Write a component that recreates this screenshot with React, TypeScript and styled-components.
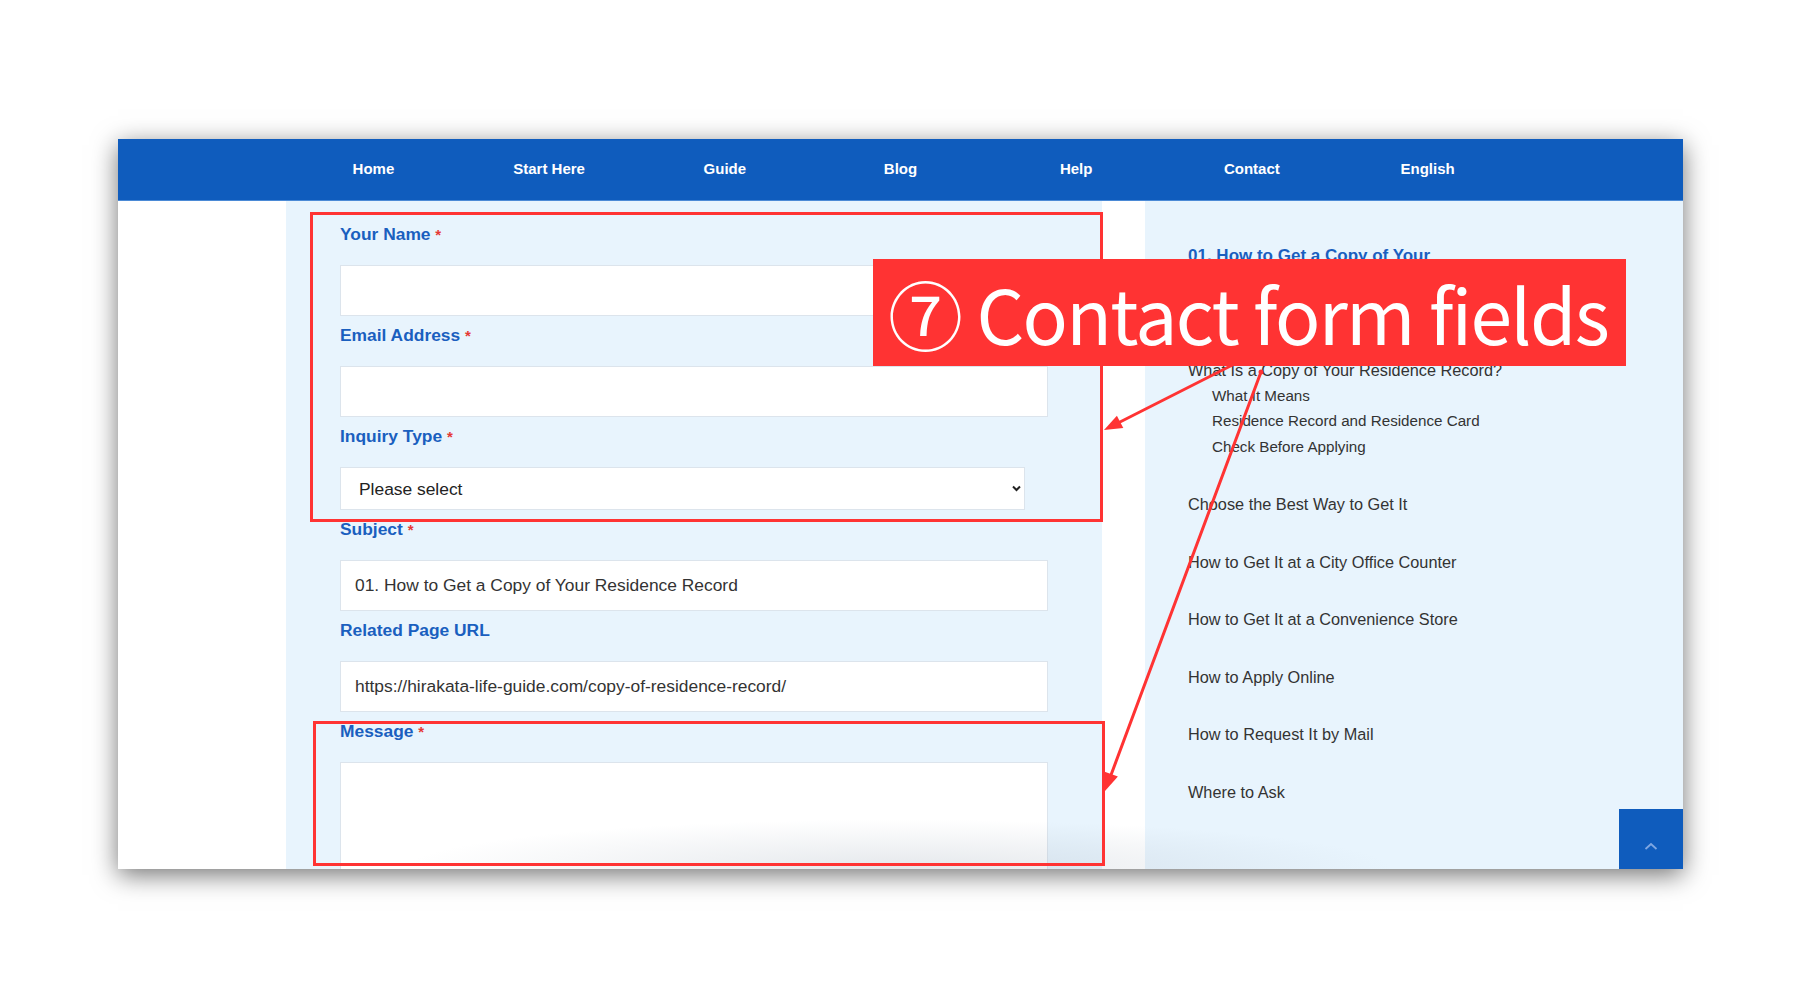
import React from "react";
import styled, { createGlobalStyle } from "styled-components";

const GlobalStyle = createGlobalStyle`
  html, body {
    margin: 0;
    padding: 0;
    background: #fff;
  }
  body {
    font-family: "Liberation Sans", Arial, sans-serif;
  }
`;

const Stage = styled.div`
  position: relative;
  width: 1800px;
  height: 1008px;
  padding: 139px 0 0 118px;
  box-sizing: border-box;
  overflow: hidden;
`;

const Frame = styled.div`
  position: relative;
  width: 1565px;
  height: 730px;
  display: flex;
  flex-direction: column;
  overflow: hidden;
  background: #fff;
  box-shadow: 0 6px 24px rgba(0, 0, 0, 0.55);
`;

const NavBar = styled.nav`
  flex: none;
  height: 62px;
  display: flex;
  justify-content: center;
  background: #0f5cbd;
  border-bottom: 1px solid #4b8ad6;
  box-sizing: border-box;
`;

const NavList = styled.ul`
  display: flex;
  margin: 0;
  padding: 0;
  list-style: none;
`;

const NavItem = styled.li`
  width: 175.7px;
  display: flex;
  align-items: center;
  justify-content: center;
  padding-bottom: 2px;
  color: #fff;
  font-size: 15px;
  font-weight: 700;
`;

const Content = styled.div`
  flex: 1;
  display: flex;
  min-height: 0;
`;

const Gutter = styled.div<{ $w: number }>`
  flex: none;
  width: ${(p) => p.$w}px;
`;

const FormPanel = styled.form`
  flex: none;
  width: 816px;
  padding: 23px 54px 0;
  box-sizing: border-box;
  background: #e8f4fd;
`;

const Label = styled.label`
  display: block;
  margin-bottom: 20px;
  font-size: 17.4px;
  font-weight: 700;
  line-height: 21px;
  color: #1a5fbf;
`;

const Req = styled.span`
  color: #e53935;
  font-size: 15px;
`;

const TextInput = styled.input`
  display: block;
  width: 100%;
  height: 51px;
  margin: 0 0 9px;
  padding: 0 14px;
  box-sizing: border-box;
  border: 1px solid #dce4ec;
  background: #fff;
  font-family: "Liberation Sans", Arial, sans-serif;
  font-size: 17.4px;
  color: #333;
  outline: none;
`;

const SelectWrap = styled.div`
  position: relative;
  width: 685px;
  margin-bottom: 9px;
`;

const Select = styled.select`
  display: block;
  width: 100%;
  height: 43px;
  padding: 0 18px;
  border: 1px solid #dce4ec;
  border-radius: 0;
  background: #fff;
  appearance: none;
  font-family: "Liberation Sans", Arial, sans-serif;
  font-size: 17.4px;
  color: #222;
  outline: none;
`;

const Chevron = styled.svg`
  position: absolute;
  right: 4px;
  top: 18px;
  pointer-events: none;
`;

const MessageBox = styled.textarea`
  display: block;
  width: 100%;
  height: 160px;
  margin: 0;
  box-sizing: border-box;
  border: 1px solid #dce4ec;
  background: #fff;
  resize: none;
  outline: none;
`;

const Sidebar = styled.aside`
  flex: 1;
  padding: 43px 0 0 43px;
  background: #e8f4fd;
`;

const TocTitle = styled.div`
  max-width: 300px;
  margin-bottom: 68px;
  font-size: 17px;
  font-weight: 700;
  line-height: 24px;
  color: #1a5fbf;
`;

const TocList = styled.ul`
  margin: 0;
  padding: 0;
  list-style: none;
`;

const TocItem = styled.li`
  margin-bottom: 37.6px;
  font-size: 16.3px;
  line-height: 20px;
  color: #333;
`;

const SubList = styled.ul`
  margin: 0;
  padding: 0 0 0 24px;
  list-style: none;
`;

const SubItem = styled.li`
  padding-top: 5.5px;
  font-size: 15.2px;
  line-height: 20px;
  color: #333;
`;

const BottomHaze = styled.div`
  position: absolute;
  left: 280px;
  bottom: 0;
  width: 1000px;
  height: 50px;
  background: radial-gradient(ellipse at 50% 100%, rgba(160, 172, 186, 0.28), rgba(160, 172, 186, 0) 70%);
  pointer-events: none;
`;

const TopButton = styled.div`
  position: absolute;
  right: 0;
  bottom: 0;
  width: 64px;
  height: 60px;
  display: flex;
  justify-content: center;
  padding-top: 33px;
  box-sizing: border-box;
  background: #0f5cbd;
`;

const Highlight = styled.div<{ $x: number; $y: number; $w: number; $h: number }>`
  position: absolute;
  left: ${(p) => p.$x}px;
  top: ${(p) => p.$y}px;
  width: ${(p) => p.$w}px;
  height: ${(p) => p.$h}px;
  border: 3px solid #ff3333;
  box-sizing: border-box;
  pointer-events: none;
`;

const Arrows = styled.svg`
  position: absolute;
  left: 0;
  top: 0;
  pointer-events: none;
`;

const Banner = styled.div`
  position: absolute;
  left: 873px;
  top: 259px;
  height: 107px;
  display: flex;
  align-items: center;
  padding: 0 18px 0 15px;
  background: #ff3333;
  color: #fff;
  font-family: "Noto Sans CJK JP", "Noto Sans", sans-serif;
  font-size: 75px;
  letter-spacing: -1.7px;
  line-height: 1;
  white-space: nowrap;
`;

const navItems = ["Home", "Start Here", "Guide", "Blog", "Help", "Contact", "English"];

const toc = [
  {
    title: "What Is a Copy of Your Residence Record?",
    children: ["What It Means", "Residence Record and Residence Card", "Check Before Applying"],
  },
  { title: "Choose the Best Way to Get It" },
  { title: "How to Get It at a City Office Counter" },
  { title: "How to Get It at a Convenience Store" },
  { title: "How to Apply Online" },
  { title: "How to Request It by Mail" },
  { title: "Where to Ask" },
];

const App: React.FC = () => {
  return (
    <>
      <GlobalStyle />
      <Stage>
        <Frame>
          <NavBar>
            <NavList>
              {navItems.map((item) => (
                <NavItem key={item}>{item}</NavItem>
              ))}
            </NavList>
          </NavBar>
          <Content>
            <Gutter $w={168} />
            <FormPanel>
              <Label>
                Your Name <Req>*</Req>
              </Label>
              <TextInput type="text" />
              <Label>
                Email Address <Req>*</Req>
              </Label>
              <TextInput type="email" />
              <Label>
                Inquiry Type <Req>*</Req>
              </Label>
              <SelectWrap>
                <Select defaultValue="">
                  <option value="">Please select</option>
                </Select>
                <Chevron width="9" height="7" viewBox="0 0 9 7">
                  <polyline points="1,1.5 4.5,5 8,1.5" fill="none" stroke="#222" strokeWidth="2" />
                </Chevron>
              </SelectWrap>
              <Label>
                Subject <Req>*</Req>
              </Label>
              <TextInput type="text" readOnly defaultValue="01. How to Get a Copy of Your Residence Record" />
              <Label>Related Page URL</Label>
              <TextInput
                type="text"
                readOnly
                defaultValue="https://hirakata-life-guide.com/copy-of-residence-record/"
              />
              <Label>
                Message <Req>*</Req>
              </Label>
              <MessageBox />
            </FormPanel>
            <Gutter $w={43} />
            <Sidebar>
              <TocTitle>01. How to Get a Copy of Your Residence Record</TocTitle>
              <TocList>
                {toc.map((item) => (
                  <TocItem key={item.title}>
                    {item.title}
                    {item.children && (
                      <SubList>
                        {item.children.map((c) => (
                          <SubItem key={c}>{c}</SubItem>
                        ))}
                      </SubList>
                    )}
                  </TocItem>
                ))}
              </TocList>
            </Sidebar>
          </Content>
          <BottomHaze />
          <TopButton>
            <svg width="14" height="8" viewBox="0 0 14 8">
              <polyline points="1.5,7 7,2 12.5,7" fill="none" stroke="#7fa7e2" strokeWidth="1.8" />
            </svg>
          </TopButton>
        </Frame>

        <Highlight $x={310} $y={212} $w={793} $h={310} />
        <Highlight $x={313} $y={721} $w={792} $h={145} />

        <Arrows width="1800" height="1008" viewBox="0 0 1800 1008">
          <g stroke="#ff3333" strokeWidth="3" fill="#ff3333" strokeLinecap="round">
            <line x1="1262" y1="350" x2="1119" y2="422.5" />
            <polygon points="1104,430 1116.9,415.7 1123.3,428.1" stroke="none" />
            <circle cx="1261" cy="372" r="2.5" stroke="none" />
            <line x1="1261" y1="372" x2="1111" y2="775" />
            <polygon points="1105,791 1104.7,771.7 1117.9,776.5" stroke="none" />
          </g>
        </Arrows>

        <Banner>⑦ Contact form fields</Banner>
      </Stage>
    </>
  );
};

export default App;
